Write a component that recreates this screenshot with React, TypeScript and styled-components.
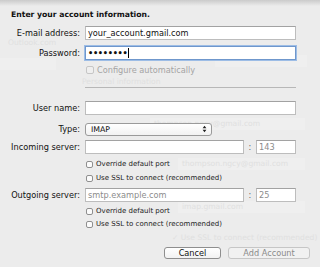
import styled, { createGlobalStyle } from "styled-components";

const GlobalStyle = createGlobalStyle`
  html, body {
    margin: 0;
    padding: 0;
    background: #ececec;
  }
  body {
    font-family: "DejaVu Sans", Verdana, sans-serif;
    font-size: 8.2px;
    color: #111;
  }
`;

const Sheet = styled.div`
  position: relative;
  width: 320px;
  height: 267px;
  overflow: hidden;
  background: #ececec;
  box-sizing: border-box;
  padding-top: 10px;
  &::before {
    content: "";
    position: absolute;
    left: 0;
    right: 0;
    top: 0;
    height: 6px;
    background: linear-gradient(#cbcbcb, #ececec);
  }
`;

/* faint window contents showing through the sheet */
const Ghost = styled.div<{ $x: number; $y: number; $w?: number }>`
  position: absolute;
  left: ${({ $x }) => $x}px;
  top: ${({ $y }) => $y}px;
  width: ${({ $w }) => ($w ? `${$w}px` : "auto")};
  height: 12px;
  line-height: 12px;
  padding-left: 4px;
  box-sizing: border-box;
  color: #e0e0e0;
  background: ${({ $w }) => ($w ? "#efefef" : "transparent")};
  font-size: 7.6px;
  white-space: nowrap;
`;

const Content = styled.div`
  position: relative;
`;

const Title = styled.div`
  font-weight: bold;
  font-size: 7.7px;
  line-height: 10px;
  height: 10px;
  padding-left: 11px;
`;

const Row = styled.div<{ $top: number }>`
  display: flex;
  align-items: center;
  margin-top: ${({ $top }) => $top}px;
  height: 14px;
`;

const Label = styled.div`
  width: 85px;
  text-align: right;
  padding-right: 5px;
  box-sizing: border-box;
  white-space: nowrap;
  line-height: 14px;
`;

const Field = styled.div<{ $w: number; $focus?: boolean; $muted?: boolean }>`
  width: ${({ $w }) => $w}px;
  height: 14px;
  box-sizing: border-box;
  background: #fff;
  border: 1px solid ${({ $focus }) => ($focus ? "#6f97cc" : "#bdbdbd")};
  border-top-color: ${({ $focus }) => ($focus ? "#6f97cc" : "#a2a2a2")};
  box-shadow: ${({ $focus }) => ($focus ? "0 0 0 1px #9dbde6" : "none")};
  padding-left: 2px;
  line-height: 12px;
  color: ${({ $muted }) => ($muted ? "#8c8c8c" : "#111")};
  white-space: nowrap;
  overflow: hidden;
`;

const Dots = styled.span`
  font-weight: bold;
  letter-spacing: -0.3px;
`;

const Caret = styled.span`
  display: inline-block;
  width: 1px;
  height: 10px;
  background: #000;
  vertical-align: -2px;
  margin-left: 1px;
`;

const Colon = styled.div`
  width: 12px;
  text-align: center;
  color: #666;
  line-height: 14px;
`;

const CheckRow = styled.div<{ $top: number; $muted?: boolean }>`
  display: flex;
  align-items: center;
  margin-top: ${({ $top }) => $top}px;
  padding-left: 86px;
  height: 10px;
  line-height: 10px;
  font-size: ${({ $muted }) => ($muted ? "8.2px" : "7px")};
  color: ${({ $muted }) => ($muted ? "#a4a4a4" : "#222")};
  white-space: nowrap;
`;

const Box = styled.span<{ $muted?: boolean }>`
  width: ${({ $muted }) => ($muted ? "8px" : "7px")};
  height: ${({ $muted }) => ($muted ? "8px" : "7px")};
  box-sizing: border-box;
  border: 1px solid ${({ $muted }) => ($muted ? "#c6c6c6" : "#8f8f8f")};
  border-radius: 2px;
  background: ${({ $muted }) => ($muted ? "#efefef" : "#fbfbfb")};
  margin-right: 3px;
  flex-shrink: 0;
`;

const Separator = styled.div`
  margin: 12px 24px 0 85px;
  height: 1px;
  background: #b7b7b7;
`;

const Select = styled.div`
  width: 127px;
  height: 13px;
  box-sizing: border-box;
  border: 1px solid #9a9a9a;
  border-radius: 3px;
  background: linear-gradient(#ffffff, #f2f2f2);
  display: flex;
  align-items: center;
  justify-content: space-between;
  padding: 0 4px 0 5px;
  font-size: 7.8px;
  line-height: 11px;
`;

const Buttons = styled.div`
  display: flex;
  justify-content: flex-end;
  gap: 7px;
  margin-top: 18px;
  padding-right: 10px;
`;

const Button = styled.div<{ $w: number; $disabled?: boolean }>`
  width: ${({ $w }) => $w}px;
  height: 12px;
  box-sizing: border-box;
  border: 1px solid ${({ $disabled }) => ($disabled ? "#c6c6c6" : "#8e8e8e")};
  border-radius: 3px;
  background: ${({ $disabled }) =>
    $disabled ? "#f1f1f1" : "linear-gradient(#ffffff, #f2f2f2)"};
  color: ${({ $disabled }) => ($disabled ? "#8a8a8a" : "#111")};
  display: flex;
  align-items: center;
  justify-content: center;
  line-height: 10px;
`;

const Check = ({ top, text, muted }: { top: number; text: string; muted?: boolean }) => (
  <CheckRow $top={top} $muted={muted}>
    <Box $muted={muted} />
    {text}
  </CheckRow>
);

const Arrows = () => (
  <svg width="5" height="8" viewBox="0 0 5 8">
    <path d="M0.6 3.2 L2.5 0.8 L4.4 3.2 Z M0.6 4.8 L2.5 7.2 L4.4 4.8 Z" fill="#222" />
  </svg>
);

export default function App() {
  return (
    <>
      <GlobalStyle />
      <Sheet>
        <Ghost $x={4} $y={37}>Outlook.com</Ghost>
        <Ghost $x={0} $y={58} $w={56} />
        <Ghost $x={215} $y={55} $w={92} />
        <Ghost $x={78} $y={76}>Personal information</Ghost>
        <Ghost $x={150} $y={118} $w={155}>thompson.ngcy@gmail.com</Ghost>
        <Ghost $x={178} $y={158} $w={127}>thompson.ngcy@gmail.com</Ghost>
        <Ghost $x={178} $y={201} $w={127}>imap.gmail.com</Ghost>
        <Ghost $x={168} $y={232}>✓ Use SSL to connect (recommended)</Ghost>
        <Content>
          <Title>Enter your account information.</Title>
          <Row $top={6}>
            <Label>E-mail address:</Label>
            <Field $w={211}>your_account.gmail.com</Field>
          </Row>
          <Row $top={6}>
            <Label>Password:</Label>
            <Field $w={211} $focus>
              <Dots>••••••••</Dots>
              <Caret />
            </Field>
          </Row>
          <Check top={5} text="Configure automatically" muted />
          <Separator />
          <Row $top={13}>
            <Label>User name:</Label>
            <Field $w={211} />
          </Row>
          <Row $top={7}>
            <Label>Type:</Label>
            <Select>
              IMAP
              <Arrows />
            </Select>
          </Row>
          <Row $top={4}>
            <Label>Incoming server:</Label>
            <Field $w={159} />
            <Colon>:</Colon>
            <Field $w={40} $muted>143</Field>
          </Row>
          <Check top={5} text="Override default port" />
          <Check top={4} text="Use SSL to connect (recommended)" />
          <Row $top={5}>
            <Label>Outgoing server:</Label>
            <Field $w={159} $muted>smtp.example.com</Field>
            <Colon>:</Colon>
            <Field $w={40} $muted>25</Field>
          </Row>
          <Check top={4} text="Override default port" />
          <Check top={3} text="Use SSL to connect (recommended)" />
          <Buttons>
            <Button $w={57}>Cancel</Button>
            <Button $w={82} $disabled>Add Account</Button>
          </Buttons>
        </Content>
      </Sheet>
    </>
  );
}
